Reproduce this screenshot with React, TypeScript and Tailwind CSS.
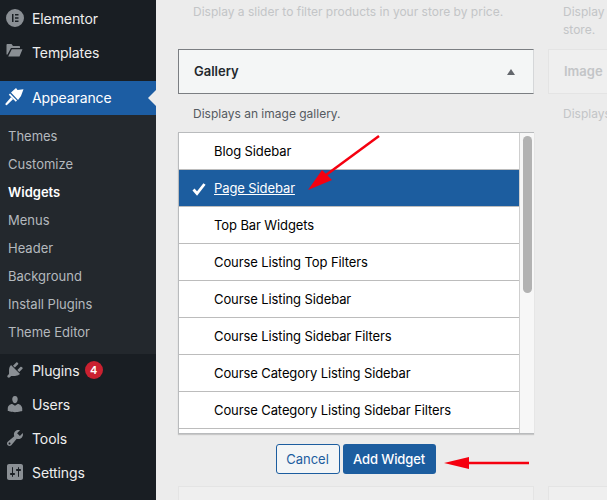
import type { ReactNode } from "react"

const paths = {
  brush:
    "M0.6 16.4L6 10.2 8 12.2 2 18c-1 .7-2.1-.5-1.4-1.6zM3.8 7.8L5 6.5l7 7-1.2 1.3zM6 5.5L11 1l1.5 2 6-.8-1.4 3.8-1.1 3L13 13z",
  plugin:
    "M13.11 4.36L9.87 7.6 8 5.73l3.24-3.24c.35-.34 1.05-.2 1.56.32.52.51.66 1.21.31 1.55zm-8 1.77l.91-1.12 9.01 9.01-1.19.84c-.71.71-2.63 1.16-3.82 1.16H6.14L4.9 17.26c-.59.59-1.54.59-2.12 0-.59-.58-.59-1.53 0-2.12l1.24-1.24v-3.88c0-1.13.4-3.19 1.09-3.89zm7.26 3.97l3.24-3.24c.34-.35 1.04-.21 1.55.31.52.51.66 1.21.31 1.55l-3.24 3.25z",
  users:
    "M10 9.25c-2.27 0-2.73-3.44-2.73-3.44C7 4.02 7.82 2 9.97 2c2.16 0 2.98 2.02 2.71 3.81 0 0-.41 3.44-2.68 3.44zm0 2.57L12.72 10c2.39 0 4.52 2.33 4.52 4.53v2.49s-3.65 1.13-7.24 1.13c-3.65 0-7.24-1.13-7.24-1.13v-2.49c0-2.25 1.94-4.48 4.47-4.48z",
  tools:
    "M16.68 9.77c-1.34 1.34-3.3 1.67-4.95.99l-5.41 6.52c-.99.99-2.59.99-3.58 0s-.99-2.59 0-3.57l6.52-5.42c-.68-1.65-.35-3.61.99-4.95 1.28-1.28 3.12-1.62 4.72-1.06l-2.89 2.89 2.82 2.82 2.86-2.87c.53 1.58.18 3.39-1.08 4.65zM3.81 16.21c.4.39 1.04.39 1.43 0 .4-.4.4-1.04 0-1.43-.39-.4-1.03-.4-1.43 0-.39.39-.39 1.03 0 1.43z",
  settings:
    "M18 16V4c0-1.1-.9-2-2-2H4c-1.1 0-2 .9-2 2v12c0 1.1.9 2 2 2h12c1.1 0 2-.9 2-2zM8 11h1c.55 0 1 .45 1 1s-.45 1-1 1H8v1.5c0 .28-.22.5-.5.5s-.5-.22-.5-.5V13H6c-.55 0-1-.45-1-1s.45-1 1-1h1V5.5c0-.28.22-.5.5-.5s.5.22.5.5V11zm5-2h-1c-.55 0-1-.45-1-1s.45-1 1-1h1V5.5c0-.28.22-.5.5-.5s.5.22.5.5V7h1c.55 0 1 .45 1 1s-.45 1-1 1h-1v5.5c0 .28-.22.5-.5.5s-.5-.22-.5-.5V9z",
  folder: "M1.5 3C1.5 2.4 2 2 2.5 2h4l1.5 2h6c.6 0 1 .4 1 1v1H6L2.5 12.5h-1V3zM6.8 7.2H17.5L14.5 14.5H3.2L6.8 7.2z",
  elementor:
    "M10 1a9 9 0 1 0 0 18 9 9 0 0 0 0-18zM7 6h1.5v8H7V6zm3 0h3.5v1.5H10V6zm0 3.25h3.5v1.5H10v-1.5zm0 3.25h3.5V14H10v-1.5z",
}

function Icon({ d, className }: { d: string; className: string }) {
  return (
    <svg viewBox="0 0 20 20" className={className} fill="currentColor" fillRule="evenodd">
      <path d={d} />
    </svg>
  )
}

function MenuItem({ icon, label, children }: { icon: string; label: string; children?: ReactNode }) {
  return (
    <div className="h-[34px] pb-[2px] flex items-center text-[#eeeeee]">
      <Icon d={icon} className="w-5 h-5 ml-[5px] mr-[7px] text-[#8a8f94]" />
      <span>{label}</span>
      {children}
    </div>
  )
}

const subItems = ["Themes", "Customize", "Widgets", "Menus", "Header", "Background", "Install Plugins", "Theme Editor"]

const sidebars = [
  "Blog Sidebar",
  "Page Sidebar",
  "Top Bar Widgets",
  "Course Listing Top Filters",
  "Course Listing Sidebar",
  "Course Listing Sidebar Filters",
  "Course Category Listing Sidebar",
  "Course Category Listing Sidebar Filters",
]

function Sidebar() {
  return (
    <aside className="w-[156px] shrink-0 bg-[#191e23] text-[14px] tracking-[-0.1px] relative">
      <div className="pt-[2px] mb-[11px]">
        <MenuItem icon={paths.elementor} label="Elementor" />
        <MenuItem icon={paths.folder} label="Templates" />
      </div>
      <div className="h-[34px] pb-[2px] flex items-center bg-[#1c5da3] text-white relative">
        <Icon d={paths.brush} className="w-5 h-5 ml-[5px] mr-[7px]" />
        <span>Appearance</span>
        <div className="absolute right-0 top-[9px] border-y-[8px] border-r-[8px] border-y-transparent border-r-[#ececec]" />
      </div>
      <div className="bg-[#23282d] h-[239px] pt-[8px] text-[13px] tracking-normal text-[#b4b9be]">
        {subItems.map((s) => (
          <div key={s} className={`h-[28px] flex items-center pl-2 ${s === "Widgets" ? "font-semibold text-white" : ""}`}>
            {s}
          </div>
        ))}
      </div>
      <MenuItem icon={paths.plugin} label="Plugins">
        <span className="ml-[5px] w-[18px] h-[18px] rounded-full bg-[#ca2130] text-white text-[11px] font-semibold flex items-center justify-center">
          4
        </span>
      </MenuItem>
      <MenuItem icon={paths.users} label="Users" />
      <MenuItem icon={paths.tools} label="Tools" />
      <MenuItem icon={paths.settings} label="Settings" />
    </aside>
  )
}

function WidgetChooser() {
  return (
    <div className="w-[356px] shrink-0">
      <p className="h-[49px] pt-[3px] pl-[15px] text-[12px] leading-[18px] text-[#c3c5c7]">
        Display a slider to filter products in your store by price.
      </p>
      <div className="h-[45px] flex items-center justify-between pl-[15px] pr-[18px] bg-[#f4f6f6] border border-[#7b7e82] border-r-[#d5d7d9] font-semibold text-[#23282d]">
        <span>Gallery</span>
        <div className="border-x-[4px] border-b-[6px] border-x-transparent border-b-[#63676c]" />
      </div>
      <p className="h-[38px] pt-[2px] flex items-center pl-[15px] text-[12px] text-[#555a60]">Displays an image gallery.</p>
      <div className="h-[302px] bg-white border border-[#b9bbbd] border-r-0 shadow-[0_1px_1px_rgba(0,0,0,0.15)] flex overflow-hidden">
        <ul className="flex-1 border-r border-[#cfcfcf] text-black tracking-[-0.1px]">
          {sidebars.map((name) => {
            const selected = name === "Page Sidebar"
            return (
              <li
                key={name}
                className={`h-[37px] pt-[2px] flex items-center pl-[35px] border-b border-[#bcbcbc] relative ${selected ? "bg-[#1c5d9f] text-white" : ""}`}
              >
                {selected && (
                  <svg viewBox="0 0 14 13" className="absolute left-[13px] top-[13px] w-[14px] h-[13px]" fill="none" stroke="white" strokeWidth="2.8">
                    <path d="M1.5 6.5L5 10.5L12.5 1" />
                  </svg>
                )}
                <span className={selected ? "underline" : ""}>{name}</span>
              </li>
            )
          })}
        </ul>
        <div className="w-[14px] shrink-0 bg-[#f7f7f7] pt-[3px] pl-[3px]">
          <div className="w-[9px] h-[157px] rounded-full bg-[#b2b2b2]" />
        </div>
      </div>
      <div className="mt-[10px] flex justify-center gap-[3px] pr-[1px]">
        <button className="w-[64px] h-[30px] pt-[2px] rounded-[3px] border border-[#1c5d9f] bg-[#f3f5f6] text-[#1c5d9f]">Cancel</button>
        <button className="w-[93px] h-[30px] pt-[2px] rounded-[3px] bg-[#1c5d9f] text-white font-medium tracking-[-0.1px]">Add Widget</button>
      </div>
      <div className="mt-[12px] h-[20px] bg-[#efefef] border border-[#e4e4e4]" />
    </div>
  )
}

function GhostColumn() {
  return (
    <div className="w-[356px] shrink-0 text-[#c3c5c7]">
      <p className="h-[49px] pt-[3px] pl-[15px] text-[12px] leading-[18px]">
        Display
        <br />
        store.
      </p>
      <div className="h-[45px] flex items-center pl-[15px] bg-[#efefef] border border-[#e4e4e4] font-semibold">Image</div>
      <p className="h-[38px] pt-[2px] flex items-center pl-[15px] text-[12px]">Displays</p>
      <div className="mt-[354px] h-[20px] bg-[#efefef] border border-[#e4e4e4]" />
    </div>
  )
}

export default function App() {
  return (
    <div className="w-[607px] h-[500px] overflow-hidden flex bg-[#ececec] text-[13px] relative font-['Inter','Noto_Sans',sans-serif]">
      <Sidebar />
      <main className="flex-1 flex gap-[14px] pl-[22px] overflow-hidden">
        <WidgetChooser />
        <GhostColumn />
      </main>

      {/* red annotation arrows */}
      <svg viewBox="0 0 607 500" className="absolute inset-0 w-[607px] h-[500px] pointer-events-none">
        <path d="M379 136L326 175" stroke="#f5000f" strokeWidth="2.5" fill="none" />
        <path d="M308 190L322 170L332 180Z" fill="#f5000f" />
        <path d="M529 463H468" stroke="#f5000f" strokeWidth="2.5" fill="none" />
        <path d="M444 463L469 457V469Z" fill="#f5000f" />
      </svg>
    </div>
  )
}
